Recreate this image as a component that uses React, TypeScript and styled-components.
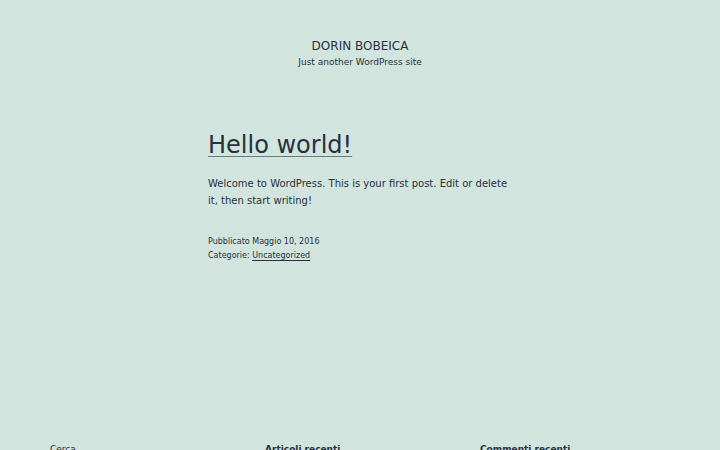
import React from "react";
import styled, { createGlobalStyle } from "styled-components";

const Global = createGlobalStyle`
  html, body { margin: 0; padding: 0; background: #d1e4dd; }
  body {
    font-family: "DejaVu Sans", sans-serif;
    color: #28303d;
    -webkit-font-smoothing: antialiased;
  }
  * { box-sizing: border-box; }
`;

const Page = styled.div`
  min-height: 450px;
  background: #d1e4dd;
  display: flex;
  flex-direction: column;
`;

const Header = styled.header`
  padding-top: 38px;
  display: flex;
  flex-direction: column;
  align-items: center;
`;

const SiteTitle = styled.div`
  font-size: 12px;
  line-height: 17px;
  text-transform: uppercase;
`;

const Tagline = styled.div`
  font-size: 9px;
  line-height: 15px;
`;

const Main = styled.main`
  width: 304px;
  margin: 60px auto 0;
  height: 311px;
`;

const PostTitle = styled.h1`
  margin: 0;
  font-size: 24px;
  font-weight: 400;
  line-height: 30px;
`;

const TitleLink = styled.a`
  color: inherit;
  text-decoration: underline;
  text-decoration-thickness: 1px;
  text-decoration-color: #6b7a80;
  text-underline-offset: 3px;
`;

const Paragraph = styled.p`
  margin: 15px 0 0;
  font-size: 10px;
  line-height: 17px;
`;

const Meta = styled.div`
  margin-top: 26px;
  font-size: 8px;
  line-height: 14px;
`;

const MetaLink = styled.a`
  color: inherit;
  text-decoration: underline;
  text-underline-offset: 2px;
`;

const Footer = styled.footer`
  width: 620px;
  margin: 0 auto;
  display: grid;
  grid-template-columns: repeat(3, 1fr);
  column-gap: 25px;
`;

const Widget = styled.div<{ $bold?: boolean }>`
  font-size: 9px;
  line-height: 17px;
  font-weight: ${(p) => (p.$bold ? 700 : 400)};
`;

export default function App() {
  return (
    <>
      <Global />
      <Page>
        <Header>
          <SiteTitle>Dorin Bobeica</SiteTitle>
          <Tagline>Just another WordPress site</Tagline>
        </Header>
        <Main>
          <PostTitle>
            <TitleLink href="#">Hello world!</TitleLink>
          </PostTitle>
          <Paragraph>
            Welcome to WordPress. This is your first post. Edit or delete it,
            then start writing!
          </Paragraph>
          <Meta>
            <div>Pubblicato Maggio 10, 2016</div>
            <div>
              Categorie: <MetaLink href="#">Uncategorized</MetaLink>
            </div>
          </Meta>
        </Main>
        <Footer>
          <Widget>Cerca</Widget>
          <Widget $bold>Articoli recenti</Widget>
          <Widget $bold>Commenti recenti</Widget>
        </Footer>
      </Page>
    </>
  );
}
